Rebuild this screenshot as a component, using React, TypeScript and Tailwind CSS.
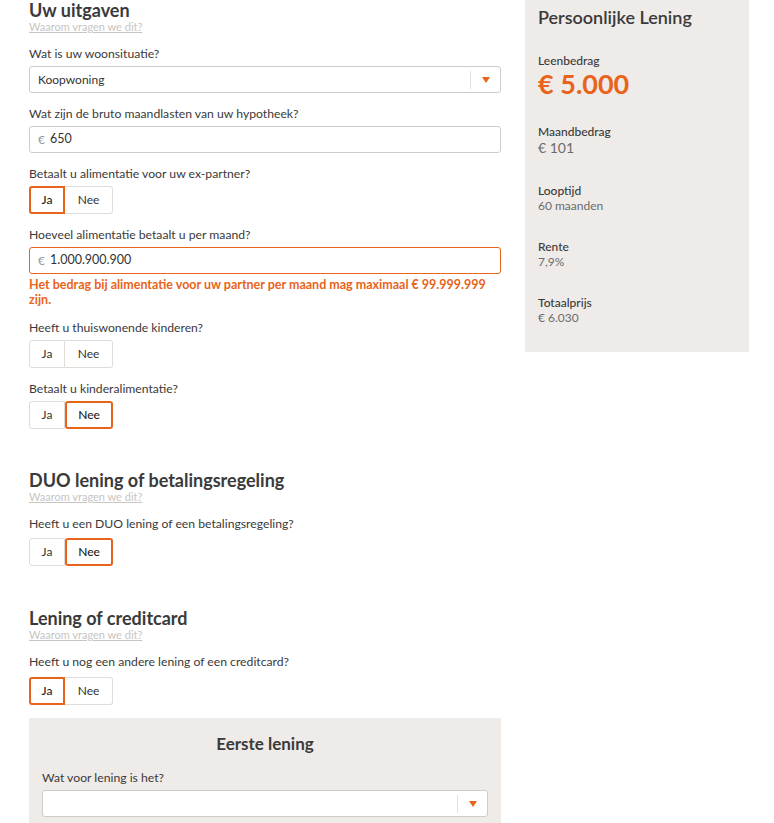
const font = { fontFamily: 'Lato, "Open Sans", sans-serif' };

// Small orange triangle used in the select boxes
const Caret = () => (
  <svg width="8" height="6" viewBox="0 0 8 6" className="block">
    <path d="M0 0 L8 0 L4 6 Z" fill="#e8641b" />
  </svg>
);

const SelectBox = ({ value }: { value?: string }) => (
  <div className="flex h-[27px] w-full items-center rounded-[3px] border border-[#cfcbc8] bg-white">
    <span className="flex-1 pl-[8px] text-[12px] text-[#333]">{value}</span>
    <span className="h-[18px] w-px bg-[#e2dfdc]" />
    <span className="flex w-[29px] justify-center">
      <Caret />
    </span>
  </div>
);

const MoneyInput = ({ value, error }: { value: string; error?: boolean }) => (
  <div
    className={`flex h-[27px] w-full items-center rounded-[3px] border bg-white pl-[8px] ${
      error ? 'border-[#e8641b]' : 'border-[#cfcbc8]'
    }`}
  >
    <span className="mr-[5px] text-[12px] text-[#9a9a9a]">€</span>
    <span className="text-[12.5px] text-[#333]">{value}</span>
  </div>
);

const YesNo = ({ selected }: { selected?: 'ja' | 'nee' }) => (
  <div className="flex">
    <div
      className={`flex h-[28px] w-[36px] items-center justify-center rounded-l-[3px] text-[12px] ${
        selected === 'ja'
          ? 'border-2 border-[#e8641b] font-medium text-[#222]'
          : 'border border-[#e2dcd8] text-[#333]'
      }`}
    >
      Ja
    </div>
    <div
      className={`flex h-[28px] w-[48px] items-center justify-center rounded-r-[3px] text-[12px] ${
        selected === 'nee'
          ? 'rounded-l-[3px] border-2 border-[#e8641b] font-medium text-[#222]'
          : 'border border-l-0 border-[#e2dcd8] text-[#333]'
      }`}
    >
      Nee
    </div>
  </div>
);

const Field = ({
  label,
  gap = 'mb-[4px]',
  children,
}: {
  label: string;
  gap?: string;
  children: React.ReactNode;
}) => (
  <div className="mt-[12px]">
    <div className={`${gap} text-[12.2px] leading-[17px] text-[#3a3a3a]`}>{label}</div>
    {children}
  </div>
);

const SectionTitle = ({ title }: { title: string }) => (
  <div className="mb-[2px]">
    <h2 className="text-[18px] font-bold leading-[20px] text-[#3a3a3a]">{title}</h2>
    <a className="block text-[11px] leading-[13px] text-[#c8c4c1] underline">Waarom vragen we dit?</a>
  </div>
);

const Stat = ({ label, value }: { label: string; value: string }) => (
  <div className="mt-[26px]">
    <div className="text-[12px] font-medium leading-[15px] text-[#3a3a3a]">{label}</div>
    <div className="text-[12px] leading-[15px] text-[#6b6b6b]">{value}</div>
  </div>
);

export default function App() {
  return (
    <div className="flex min-h-[823px] bg-white" style={font}>
      {/* Form column */}
      <div className="ml-[29px] w-[472px]">
        <SectionTitle title="Uw uitgaven" />
        <Field label="Wat is uw woonsituatie?">
          <SelectBox value="Koopwoning" />
        </Field>
        <Field label="Wat zijn de bruto maandlasten van uw hypotheek?">
          <MoneyInput value="650" />
        </Field>
        <Field label="Betaalt u alimentatie voor uw ex-partner?">
          <YesNo selected="ja" />
        </Field>
        <Field label="Hoeveel alimentatie betaalt u per maand?">
          <MoneyInput value="1.000.900.900" error />
          <p className="mt-[3px] text-[12.5px] font-bold leading-[15px] text-[#e8641b]">
            Het bedrag bij alimentatie voor uw partner per maand mag maximaal € 99.999.999 zijn.
          </p>
        </Field>
        <Field label="Heeft u thuiswonende kinderen?">
          <YesNo />
        </Field>
        <Field label="Betaalt u kinderalimentatie?">
          <YesNo selected="nee" />
        </Field>

        <div className="mt-[41px]">
          <SectionTitle title="DUO lening of betalingsregeling" />
          <Field label="Heeft u een DUO lening of een betalingsregeling?" gap="mb-[6px]">
            <YesNo selected="nee" />
          </Field>
        </div>

        <div className="mt-[42px]">
          <SectionTitle title="Lening of creditcard" />
          <Field label="Heeft u nog een andere lening of een creditcard?" gap="mb-[7px]">
            <YesNo selected="ja" />
          </Field>
        </div>

        <div className="mt-[13px] bg-[#efebe8] px-[13px] pb-[20px] pt-[14px]">
          <h3 className="text-center text-[17px] font-bold leading-[24px] text-[#3a3a3a]">Eerste lening</h3>
          <div className="mt-[13px]">
            <div className="mb-[4px] text-[12.2px] leading-[17px] text-[#3a3a3a]">Wat voor lening is het?</div>
            <SelectBox />
          </div>
        </div>
      </div>

      {/* Summary panel */}
      <div className="ml-[24px] h-[352px] w-[224px] bg-[#efebe8] px-[13px] pt-[7px]">
        <h2 className="text-[18px] font-semibold leading-[20px] text-[#3a3a3a]">Persoonlijke Lening</h2>
        <div className="mt-[26px] text-[12px] font-medium leading-[15px] text-[#3a3a3a]">Leenbedrag</div>
        <div className="mt-[2px] text-[27px] font-bold leading-[28px] text-[#e8641b]">€ 5.000</div>
        <div className="mt-[26px] text-[12px] font-medium leading-[15px] text-[#3a3a3a]">Maandbedrag</div>
        <div className="text-[14px] leading-[18px] text-[#6b6b6b]">€ 101</div>
        <Stat label="Looptijd" value="60 maanden" />
        <Stat label="Rente" value="7,9%" />
        <Stat label="Totaalprijs" value="€ 6.030" />
      </div>
    </div>
  );
}
